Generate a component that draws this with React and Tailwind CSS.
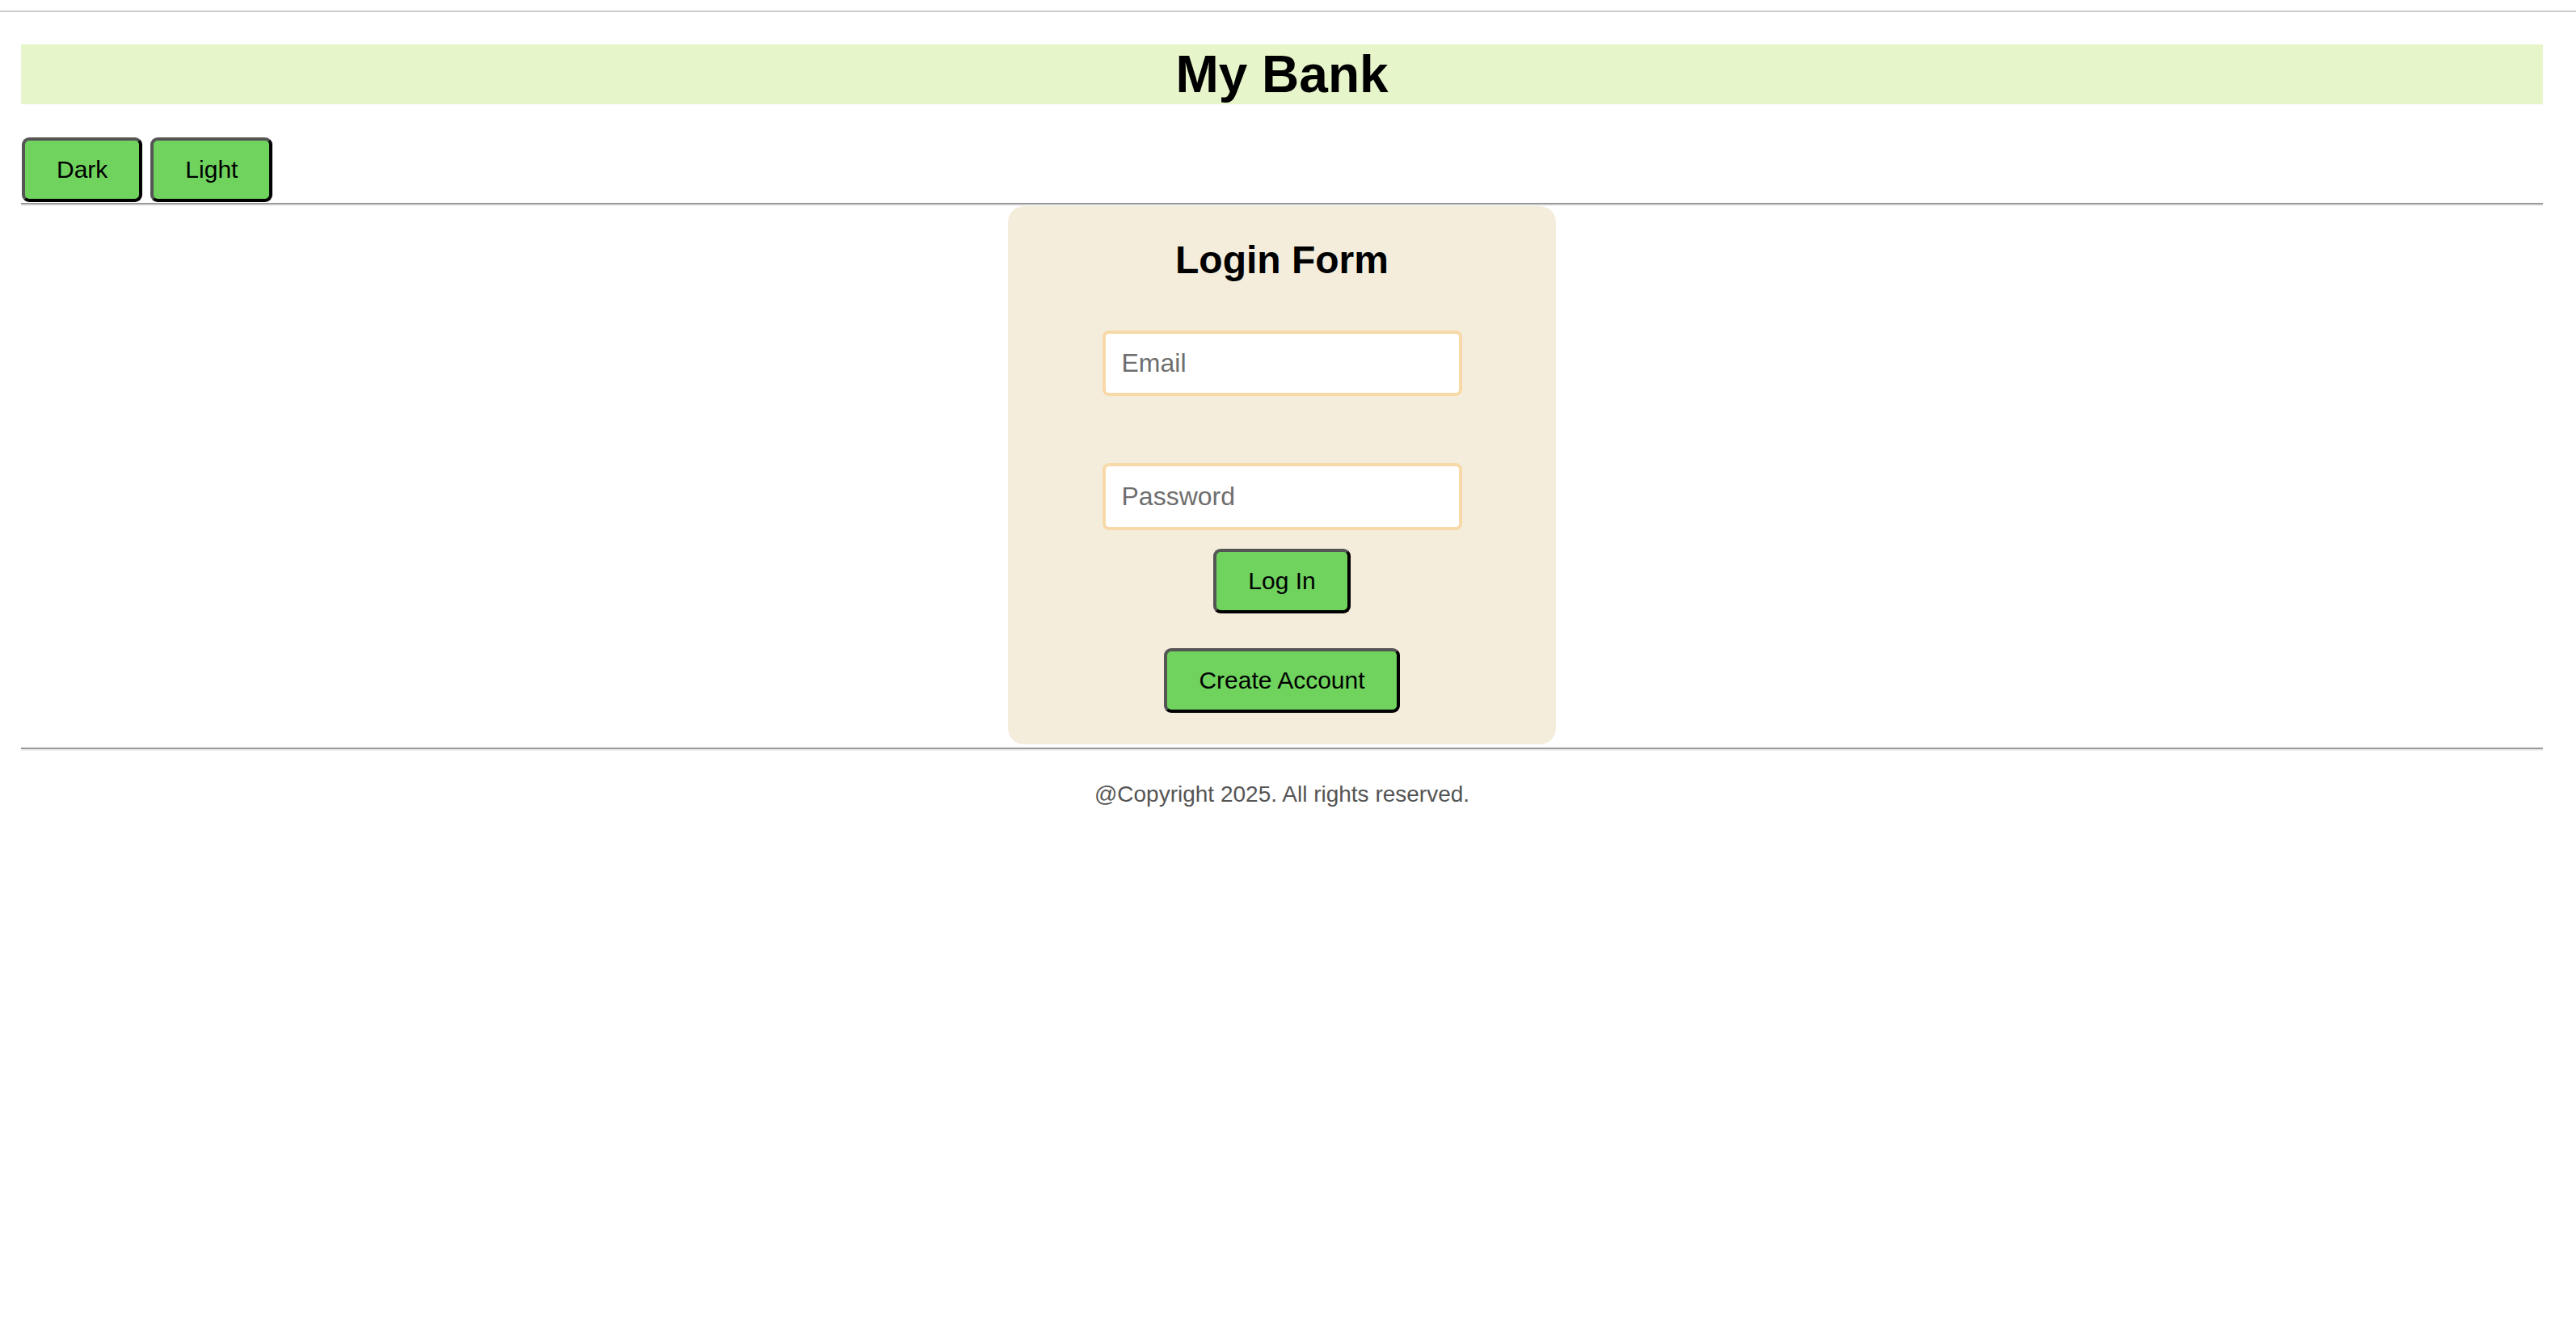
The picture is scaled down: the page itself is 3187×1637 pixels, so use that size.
import React from "react";

const btn =
  "bg-[#6fd35e] text-black text-[30px] leading-[34px] px-[39px] py-[19px] rounded-[9px] border-[4px] border-t-[#555555] border-l-[#555555] border-b-black border-r-black";

const App = () => {
  return (
    <div className="min-h-screen bg-white font-['Liberation_Sans',Arial,sans-serif] text-black">
      {/* top rule */}
      <div className="pt-[13px]">
        <div className="h-[2px] bg-[#cccccc]" />
      </div>

      <div className="pl-[26px] pr-[41px]">
        {/* Header */}
        <h1 className="mt-[40px] bg-[#e7f5ca] text-center text-[64px] font-bold leading-[74px]">My Bank</h1>

        {/* Theme buttons */}
        <div className="mt-[41px] flex gap-[10px] pl-[1px]">
          <button className={btn}>Dark</button>
          <button className={btn}>Light</button>
        </div>

        <div className="mt-[1px] border-t-[2px] border-b-[2px] border-t-[#999999] border-b-[#eeeeee]" />

        {/* Login card */}
        <div className="mx-auto flex w-[678px] flex-col items-center rounded-[20px] bg-[#f4eddc] pb-[39px]">
          <h2 className="mt-[39px] text-[48px] font-bold leading-[55px]">Login Form</h2>
          <input
            type="email"
            placeholder="Email"
            className="mt-[60px] h-[81px] w-[445px] rounded-[8px] border-[4px] border-[#f8d9a8] bg-white px-[20px] text-[32px] placeholder:text-[#6e6e6e] outline-none"
          />
          <input
            type="password"
            placeholder="Password"
            className="mt-[83px] h-[83px] w-[445px] rounded-[8px] border-[4px] border-[#f8d9a8] bg-white px-[20px] text-[32px] placeholder:text-[#6e6e6e] outline-none"
          />
          <button className={btn + " mt-[23px]"}>Log In</button>
          <button className={btn + " mt-[43px]"}>Create Account</button>
        </div>

        <div className="mt-[4px] border-t-[2px] border-b-[2px] border-t-[#999999] border-b-[#eeeeee]" />

        {/* Footer */}
        <p className="mt-[38px] text-center text-[28px] leading-[32px] text-[#555555]">
          @Copyright 2025. All rights reserved.
        </p>
      </div>
    </div>
  );
};

export default App;
